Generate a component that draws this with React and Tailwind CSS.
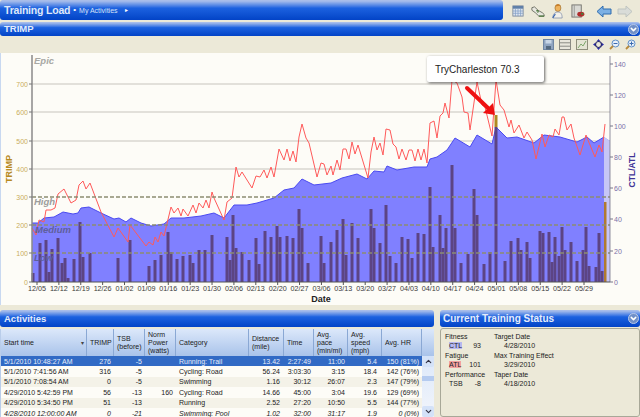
import { ChevronDown } from 'lucide-react';

const sans = { fontFamily: '"Liberation Sans", Arial, sans-serif' };

const ctl = [[31,223],[37,223],[43,218],[53,217],[62,212],[72,214],[77,213],[80,208],[88,207],[100,213],[113,219],[118,218],[125,222],[130,218],[140,223],[150,226],[163,224],[170,218],[183,218],[200,216],[213,213],[223,218],[233,205],[246,205],[256,203],[273,198],[283,190],[293,188],[301,179],[313,185],[330,183],[341,178],[356,174],[366,179],[373,171],[383,172],[386,166],[396,170],[413,167],[426,167],[429,159],[436,157],[446,150],[454,138],[469,147],[476,135],[491,144],[495,127],[506,138],[516,137],[533,143],[543,135],[559,137],[576,142],[586,137],[593,143],[603,137],[609,141]];

const atl = [[31,228],[35,235],[38,220],[43,222],[45,210],[50,210],[54,208],[57,194],[63,189],[70,203],[75,200],[78,185],[82,181],[85,189],[89,183],[100,212],[113,237],[117,228],[127,242],[129,225],[145,246],[148,242],[152,245],[154,237],[157,242],[160,232],[163,236],[170,207],[173,213],[177,208],[180,216],[182,209],[187,216],[192,205],[195,213],[198,203],[202,208],[205,200],[208,208],[211,192],[213,198],[223,220],[226,202],[231,198],[235,167],[238,177],[241,172],[246,180],[251,188],[255,176],[259,177],[263,170],[266,178],[270,167],[273,177],[278,149],[283,160],[286,149],[289,161],[292,151],[295,162],[298,137],[301,124],[305,138],[308,143],[316,177],[320,163],[323,164],[326,175],[330,166],[332,175],[336,160],[339,170],[342,149],[345,149],[348,159],[351,142],[354,154],[357,145],[367,178],[370,152],[373,137],[376,150],[379,143],[382,155],[385,129],[389,130],[392,144],[395,147],[398,159],[401,149],[405,160],[408,150],[411,150],[414,161],[417,149],[420,160],[423,149],[426,163],[429,123],[433,121],[436,138],[439,116],[442,113],[444,103],[448,118],[451,80],[456,83],[461,97],[463,112],[467,113],[469,130],[476,82],[481,105],[484,107],[491,136],[495,80],[499,105],[503,110],[508,127],[510,120],[513,133],[518,125],[523,138],[526,132],[531,140],[535,159],[541,134],[544,147],[548,135],[552,137],[554,129],[558,135],[561,117],[563,117],[566,130],[570,124],[573,138],[579,155],[585,135],[589,145],[594,157],[598,145],[601,152],[604,124]];

const bars = [[32,273],[39,243],[45,240],[48,272],[51,249],[57,238],[61,263],[64,258],[67,278],[73,259],[79,222],[82,257],[89,253],[117,258],[129,240],[148,266],[154,260],[160,255],[167,232],[170,252],[176,259],[182,256],[189,255],[192,263],[198,250],[204,250],[211,235],[226,237],[229,260],[232,215],[235,248],[241,252],[248,260],[255,238],[258,264],[264,231],[270,237],[276,226],[279,237],[286,236],[292,238],[298,209],[301,228],[307,263],[320,236],[323,263],[330,242],[336,230],[342,219],[345,255],[351,223],[357,238],[370,209],[373,228],[379,243],[385,205],[389,256],[395,263],[401,237],[407,239],[411,258],[417,233],[423,234],[429,187],[432,247],[439,215],[442,248],[445,228],[451,165],[454,228],[460,263],[467,254],[473,189],[476,215],[483,264],[489,252],[495,127],[504,261],[510,241],[517,238],[520,250],[526,242],[529,258],[539,231],[542,233],[548,232],[551,262],[554,237],[558,256],[561,227],[564,250],[570,242],[576,261],[582,250],[585,227],[588,266],[595,267],[598,233],[601,271]];

const dates = ['12/05','12/12','12/19','12/26','01/02','01/09','01/16','01/23','01/30','02/06','02/13','02/20','02/27','03/06','03/13','03/20','03/27','04/03','04/10','04/17','04/24','05/01','05/08','05/15','05/22','05/29'];
const leftTicks = [[700,84],[600,112],[500,141],[400,169],[300,197],[200,225],[100,253],[0,282]];
const rightTicks = [[140,64],[120,95],[100,126],[80,157],[60,188],[40,219],[20,251],[0,282]];

const toPoints = (pts) => pts.map(p => p.join(',')).join(' ');

const rows = [
  ['5/1/2010 10:48:27 AM','276','-5','','Running: Trail','13.42','2:27:49','11:00','5.4','150 (81%)'],
  ['5/1/2010 7:41:56 AM','316','-5','','Cycling: Road','56.24','3:03:30','3:15','18.4','142 (76%)'],
  ['5/1/2010 7:08:54 AM','0','-5','','Swimming','1.16','30:12','26:07','2.3','147 (79%)'],
  ['4/29/2010 5:42:59 PM','56','-13','160','Cycling: Road','14.66','45:00','3:04','19.6','129 (69%)'],
  ['4/29/2010 5:34:50 PM','51','-13','','Running','2.52','27:20','10:50','5.5','144 (77%)'],
  ['4/28/2010 12:00:00 AM','0','-21','','Swimming: Pool','1.02','32:00','31:17','1.9','0 (0%)'],
];

const headers = [
  ['Start time', 'w-[86px]'],
  ['TRIMP', 'w-[27px]'],
  ['TSB (before)', 'w-[31px]'],
  ['Norm Power (watts)', 'w-[31px]'],
  ['Category', 'w-[73px]'],
  ['Distance (mile)', 'w-[35px]'],
  ['Time', 'w-[30px]'],
  ['Avg. pace (min/mi)', 'w-[34px]'],
  ['Avg. speed (mph)', 'w-[34px]'],
  ['Avg. HR', 'w-[40px]'],
];

const barGradient = 'bg-linear-to-b from-[#a8bdea] from-5% via-[#1c62e0] via-40% to-[#0343c6]';

function Collapse() {
  return (
    <span className="flex h-[11px] w-[11px] items-center justify-center rounded-full bg-[#6f8fc8] border border-[#b8c8e8]">
      <ChevronDown size={9} strokeWidth={4} className="text-white" />
    </span>
  );
}

function TopIcons() {
  return (
    <div className="flex flex-1 items-center pl-[9px]">
      <svg width="12" height="12" viewBox="0 0 14 13" preserveAspectRatio="none">
        <rect x="1" y="1" width="12" height="11" fill="#dfe6f0" stroke="#7c8a9c" />
        <rect x="1" y="1" width="12" height="3" fill="#5f7fa8" />
        <path d="M1 6.5h12M1 9h12M4 4v8M7 4v8M10 4v8" stroke="#7f9cc4" strokeWidth="0.8" />
      </svg>
      <svg width="14" height="11" viewBox="0 0 16 13" className="ml-[7px]" preserveAspectRatio="none">
        <path d="M1 2l3-1 4 4 5 3 2 2v2H9L5 8 1 5z" fill="#e8e8e0" stroke="#55584c" strokeWidth="0.9" />
        <path d="M6 6l2-1M7 7.5l2-1M9 12h6" stroke="#4c7a3c" strokeWidth="1.3" />
      </svg>
      <svg width="11" height="16" viewBox="0 0 13 16" className="ml-[7px]" preserveAspectRatio="none">
        <circle cx="7" cy="5" r="3.5" fill="#eeb35e" stroke="#9a6a28" strokeWidth="0.7" />
        <path d="M4 3.5C5 0.5 10 0.5 10.5 4L10 2.5z" fill="#c87d28" />
        <path d="M1 15c0-4 2.5-6 6-6s5 2 5 6z" fill="#f2f0e8" stroke="#7c8aa8" strokeWidth="0.8" />
        <path d="M1 15c1-2 2-3 3-4" stroke="#3c66b0" strokeWidth="1.2" fill="none" />
      </svg>
      <svg width="14" height="14" viewBox="0 0 15 15" className="ml-[8px]">
        <rect x="1" y="1" width="10" height="13" fill="#d9d9d4" stroke="#73736e" />
        <path d="M3.5 1v13" stroke="#9a9a94" />
        <ellipse cx="10.5" cy="11" rx="3.8" ry="2.6" fill="#b02c2c" />
        <circle cx="12" cy="10.5" r="1.2" fill="#3c8a3c" />
      </svg>
      <svg width="16" height="13" viewBox="0 0 16 13" className="ml-[11px]">
        <path d="M1 6.5L7 1v3h8v5H7v3z" fill="#7cb0e4" stroke="#2f6cae" />
      </svg>
      <svg width="16" height="13" viewBox="0 0 16 13" className="ml-[5px]">
        <path d="M15 6.5L9 1v3H1v5h8v3z" fill="#d9dcd8" stroke="#bfc4c0" />
      </svg>
    </div>
  );
}

function ChartTools() {
  return (
    <div className="flex h-[14px] items-center justify-end gap-[5px] pr-[4px]">
      <svg width="11" height="11" viewBox="0 0 11 11">
        <rect x="0.5" y="0.5" width="10" height="10" fill="#8fa4c0" stroke="#6f86a4" />
        <rect x="2.5" y="1" width="6" height="3.5" fill="#c8d6e6" />
        <rect x="3" y="7" width="5" height="3.5" fill="#54697f" />
      </svg>
      <svg width="12" height="11" viewBox="0 0 12 11">
        <rect x="0.5" y="0.5" width="11" height="10" fill="#e8e6dc" stroke="#8a8a84" />
        <path d="M0.5 3.8h11M0.5 7.2h11" stroke="#8a8a84" />
      </svg>
      <svg width="12" height="11" viewBox="0 0 12 11">
        <rect x="0.5" y="0.5" width="11" height="10" fill="#e4e4d4" stroke="#8f8f7c" />
        <path d="M2 9L5 5l2 2 3-5" stroke="#7ea86c" fill="none" />
      </svg>
      <svg width="11" height="11" viewBox="0 0 11 11">
        <circle cx="5.5" cy="5.5" r="3" fill="none" stroke="#26266e" strokeWidth="1.2" />
        <path d="M5.5 0l1.6 2H3.900zM5.500 11l1.600-2H3.900zM0 5.500l2-1.600v3.200zM11 5.500l-2-1.600v3.200z" fill="#2a2aa8" />
      </svg>
      <svg width="11" height="11" viewBox="0 0 11 11">
        <circle cx="6.500" cy="4.500" r="3.500" fill="#e8f0fa" stroke="#5f8fc8" />
        <path d="M4.500 4.500h4" stroke="#3a6ab0" />
        <path d="M4 7L1 10" stroke="#b88a3c" strokeWidth="1.800" />
      </svg>
      <svg width="11" height="11" viewBox="0 0 11 11">
        <circle cx="6.500" cy="4.500" r="3.500" fill="#e8f0fa" stroke="#5f8fc8" />
        <path d="M4.500 4.500h4M6.500 2.500v4" stroke="#3a6ab0" />
        <path d="M4 7L1 10" stroke="#b88a3c" strokeWidth="1.800" />
      </svg>
    </div>
  );
}

function Chart() {
  return (
    <svg width="640" height="252" viewBox="0 53 640 252" className="block" style={sans}>
      {leftTicks.slice(0, 4).map(([v, y]) => (
        <line key={v} x1="31" x2="609" y1={y} y2={y} stroke="#d9d7d0" strokeWidth="1.500" />
      ))}
      <polygon points={`31,282 ${toPoints(ctl)} 609,282`} fill="#8080ff" />
      <polygon points="603,137 609,141 609,282 603,282" fill="#c6c6f6" />
      <polyline points={toPoints(ctl.slice(0, -1))} fill="none" stroke="#4a4af0" strokeWidth="1" />
      {bars.map(([x, y]) => (
        <rect key={x} x={x - 1.500} y={y} width="3" height={282 - y} fill="#5c4484" />
      ))}
      <rect x="603" y="202" width="2.500" height="80" fill="#b07a30" />
      <rect x="493.500" y="115" width="3" height="12" fill="#b08a20" />
      <polyline points={toPoints(atl)} fill="none" stroke="#ff5a5a" strokeWidth="1" />
      {[197, 225, 253].map(y => (
        <line key={y} x1="31" x2="609" y1={y} y2={y} stroke="#8c8c72" strokeWidth="1.500" strokeDasharray="4 2" />
      ))}
      <line x1="31" x2="31" y1="55" y2="282" stroke="#8a8a8a" strokeWidth="1.500" />
      <line x1="609" x2="609" y1="56" y2="282" stroke="#77778a" strokeWidth="0.800" />
      <line x1="31" x2="609" y1="282" y2="282" stroke="#555" strokeWidth="1" />

      <g fontSize="9.500" fontStyle="italic" fontWeight="700">
        <text x="33" y="64" fill="#a8a8a4">Epic</text>
        <text x="33" y="205" fill="#9c9c9c">High</text>
        <text x="34" y="233" fill="#5f5f9c">Medium</text>
        <text x="33" y="261" fill="#5f5f9c">Low</text>
      </g>

      {leftTicks.map(([v, y]) => (
        <g key={v}>
          <line x1="28" x2="31" y1={y} y2={y} stroke="#777" />
          <text x="27" y={y + 2.500} textAnchor="end" fontSize="7" fill="#c9ad5c">{v}</text>
        </g>
      ))}
      {rightTicks.map(([v, y]) => (
        <g key={v}>
          <line x1="609" x2="612" y1={y} y2={y} stroke="#77778a" />
          <text x="613" y={y + 2.500} fontSize="7" fill="#7a70a8">{v}</text>
        </g>
      ))}
      {dates.map((d, i) => {
        const x = 36 + i * 21.880;
        return (
          <g key={d}>
            <line x1={x} x2={x} y1="282" y2="285" stroke="#555" />
            <text x={x} y="291" textAnchor="middle" fontSize="7.200" fill="#3a3a3a">{d}</text>
          </g>
        );
      })}
      <text x="320" y="302" textAnchor="middle" fontSize="9" fontWeight="700" fill="#222">Date</text>
      <text transform="translate(11 169) rotate(-90)" textAnchor="middle" fontSize="9" fontWeight="700" fill="#b88a1e">TRIMP</text>
      <text transform="translate(634 170) rotate(-90)" textAnchor="middle" fontSize="8.500" fontWeight="700" fill="#3f3496">CTL/ATL</text>

      <line x1="466" y1="88" x2="487" y2="108" stroke="#ee1111" strokeWidth="4" strokeLinecap="round" />
      <polygon points="494,115 482,113 492,103" fill="#ee1111" />
    </svg>
  );
}

export default function App() {
  return (
    <div className="flex h-[417px] w-[640px] flex-col overflow-hidden bg-[#ece9d8]" style={sans}>
      <div className="flex h-[22px] shrink-0">
        <div className={`flex h-[20px] w-[503px] items-center rounded-[3px] pl-[4px] text-white ${barGradient}`}>
          <span className="text-[10.500px] leading-none font-bold tracking-[-0.2px] text-[#dfe8fa]">Training Load</span>
          <span className="ml-[3px] text-[8px] leading-none">•</span>
          <span className="ml-[3px] text-[7px] leading-none text-[#d5e0f6]">My Activities</span>
          <span className="ml-[7px] text-[6px] leading-none">▸</span>
        </div>
        <TopIcons />
      </div>

      <div className={`flex h-[14px] shrink-0 items-center justify-between rounded-[3px] pr-[1px] pl-[4px] ${barGradient}`}>
        <span className="text-[9.500px] leading-none font-bold text-[#e4ecfb]">TRIMP</span>
        <Collapse />
      </div>
      <div className="shrink-0 pt-[1px]">
        <ChartTools />
      </div>

      <div className="relative mt-[2px] h-[252px] shrink-0 border-l border-[#c8d8f0] bg-[#fdfcf7]">
        <Chart />
        <div className="absolute top-[3px] left-[426px] flex h-[26px] w-[117px] items-center rounded-[2px] bg-white pl-[8px] text-[10px] text-[#222] shadow-[1px_1px_3px_rgba(0,0,0,0.6)]">
          TryCharleston 70.3
        </div>
      </div>

      <div className="mt-[5px] flex min-h-0 flex-1 gap-[6px]">
        <div className="flex w-[434px] shrink-0 flex-col">
          <div className={`flex h-[17px] shrink-0 items-center rounded-[3px] pl-[4px] ${barGradient}`}>
            <span className="text-[9.500px] leading-none font-bold text-[#e4ecfb]">Activities</span>
          </div>
          <div className="mt-[2px] flex min-h-0 flex-1 overflow-hidden border-l border-[#b9cdea]">
            <div className="w-[421px] shrink-0">
              <div className="flex h-[27px] bg-linear-to-b from-[#dce8fa] to-[#a9c3ea] text-[7px] leading-[8px] text-[#222]">
                {headers.map(([label, w], i) => (
                  <div key={label} className={`relative flex items-center border-r border-[#8aa8d4] pl-[3px] ${w}`}>
                    {label}
                    {i === 0 && <span className="absolute right-[2px] text-[6px] text-[#444]">▾</span>}
                  </div>
                ))}
              </div>
              {rows.map((row, i) => (
                <div
                  key={row[0]}
                  className={`flex h-[10.400px] items-center text-[7px] leading-none whitespace-nowrap ${i === 0 ? 'bg-[#316ac5] text-[#e8eefa]' : i % 2 ? 'bg-[#fdfcf7] text-[#222]' : 'bg-[#f4f2e8] text-[#222]'} ${i === 5 ? 'italic' : ''}`}
                >
                  <div className="w-[86px] pl-[3px]">{row[0]}</div>
                  <div className="w-[27px] pr-[3px] text-right">{row[1]}</div>
                  <div className="w-[31px] pr-[3px] text-right">{row[2]}</div>
                  <div className="w-[31px] pr-[3px] text-right">{row[3]}</div>
                  <div className="w-[73px] pl-[3px]">{row[4]}</div>
                  <div className="w-[35px] pr-[4px] text-right">{row[5]}</div>
                  <div className="w-[30px] pr-[3px] text-right">{row[6]}</div>
                  <div className="w-[34px] pr-[3px] text-right">{row[7]}</div>
                  <div className="w-[34px] pr-[5px] text-right">{row[8]}</div>
                  <div className="w-[40px] pr-[3px] text-right">{row[9]}</div>
                </div>
              ))}
            </div>
            <div className="flex w-[12px] shrink-0 flex-col bg-linear-to-b from-[#dce8fa] from-30% to-[#f2f5fb]">
              <div className="h-[27px] shrink-0 bg-linear-to-b from-[#dce8fa] to-[#a9c3ea]" />
              <div className="flex h-[11px] items-center justify-center rounded-[2px] bg-[#d4e2f8] text-[#334]">
                <ChevronDown size={9} strokeWidth={3} className="rotate-180" />
              </div>
              <div className="mt-[9px] h-[5px] bg-[#b5cbf0]" />
              <div className="mt-auto flex h-[11px] items-center justify-center rounded-[2px] bg-[#d4e2f8] text-[#334]">
                <ChevronDown size={9} strokeWidth={3} />
              </div>
            </div>
          </div>
        </div>

        <div className="flex min-w-0 flex-1 flex-col">
          <div className={`flex h-[17px] shrink-0 items-center justify-between rounded-[3px] pr-[1px] pl-[3px] ${barGradient}`}>
            <span className="text-[10px] leading-none font-bold text-[#e4ecfb]">Current Training Status</span>
            <Collapse />
          </div>
          <div className="mt-[1px] flex flex-1 gap-[13px] rounded-[3px] border border-[#a8a898] px-[4px] pt-[3px] text-[7px] leading-[9px] text-[#222]">
            <div className="w-[36px] shrink-0">
              <div>Fitness</div>
              <div className="flex h-[8px] items-center">
                <span className="ml-[4px] w-[25px]"><span className="bg-[#b8b8f0]">CTL</span></span>
                <span>93</span>
              </div>
              <div className="mt-[2px]">Fatigue</div>
              <div className="flex h-[8px] items-center">
                <span className="ml-[4px] w-[25px]"><span className="bg-[#f4a0a0]">ATL</span></span>
                <span>101</span>
              </div>
              <div className="mt-[2px] whitespace-nowrap">Performance</div>
              <div className="flex h-[8px] items-center">
                <span className="ml-[4px] w-[26px]">TSB</span>
                <span>-8</span>
              </div>
            </div>
            <div className="whitespace-nowrap">
              <div>Target Date</div>
              <div className="flex h-[8px] items-center pl-[10px]">4/28/2010</div>
              <div className="mt-[2px]">Max Training Effect</div>
              <div className="flex h-[8px] items-center pl-[10px]">3/29/2010</div>
              <div className="mt-[2px]">Taper Date</div>
              <div className="flex h-[8px] items-center pl-[10px]">4/18/2010</div>
            </div>
          </div>
        </div>
      </div>
    </div>
  );
}
